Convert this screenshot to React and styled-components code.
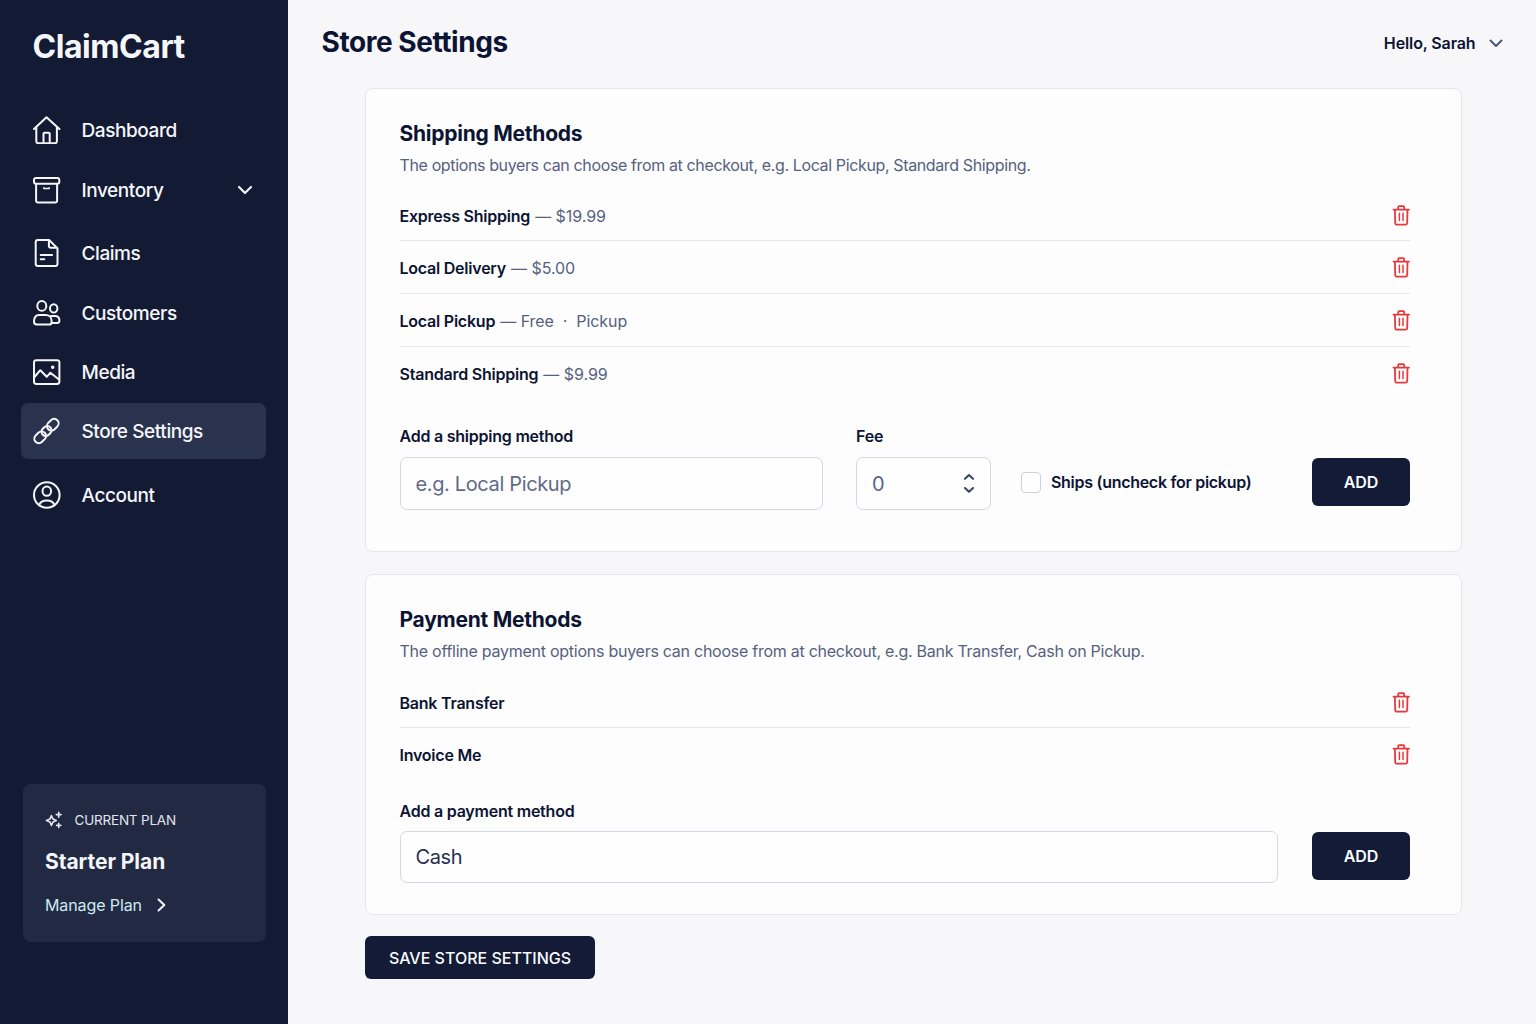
import React from 'react'
import styled, { createGlobalStyle } from 'styled-components'

const GlobalStyle = createGlobalStyle`
  * {
    box-sizing: border-box;
  }
  body {
    margin: 0;
    background: #f7f7f9;
    font-family: Inter, 'Liberation Sans', sans-serif;
    color: #0c1433;
  }
  h1, h2, p, ul {
    margin: 0;
    padding: 0;
  }
  ul {
    list-style: none;
  }
  input, button {
    font-family: inherit;
  }
`

const Page = styled.div`
  display: flex;
  height: 1024px;
  overflow: hidden;
`

/* sidebar */
const Sidebar = styled.aside`
  display: flex;
  flex-direction: column;
  flex: none;
  width: 288px;
  padding: 27px 22.5px 82px 20.5px;
  background: #131b34;
  color: #f5f6fa;
`
const Brand = styled.div`
  padding-left: 12px;
  font-size: 32px;
  font-weight: 700;
  line-height: 40px;
  letter-spacing: -0.45px;
`
const Nav = styled.nav`
  display: flex;
  flex-direction: column;
  margin-top: 35px;
`
const NavItem = styled.a`
  display: flex;
  align-items: center;
  height: 56px;
  margin-top: ${props => props.$gap}px;
  padding: 0 13px 0 12px;
  border-radius: 7px;
  background: ${props => (props.$active ? '#2a334e' : 'transparent')};
`
const NavLabel = styled.span`
  flex: 1;
  padding: 1px 0 0 21px;
  font-size: 19px;
  font-weight: 450;
  line-height: 24px;
  letter-spacing: -0.42px;
`
const Plan = styled.section`
  margin: auto 0 0 2px;
  padding: 26px 22.5px 27px;
  border-radius: 8px;
  background: #222943;
`
const PlanTag = styled.div`
  display: flex;
  align-items: center;
  gap: 11.5px;
  font-size: 13.5px;
  line-height: 20px;
  letter-spacing: -0.2px;
  color: #e3e5ee;
`
const PlanName = styled.div`
  margin-top: 19px;
  font-size: 21px;
  font-weight: 650;
  line-height: 26px;
  letter-spacing: -0.05px;
`
const PlanLink = styled.a`
  display: flex;
  align-items: center;
  gap: 15px;
  margin-top: 20px;
  font-size: 16px;
  line-height: 20px;
  letter-spacing: -0.1px;
  color: #cdeaf2;
`

/* main column */
const Main = styled.main`
  flex: 1;
`
const Header = styled.header`
  display: flex;
  align-items: center;
  justify-content: space-between;
  height: 88px;
  padding: 0 33.5px 4px 33.5px;
`
const PageTitle = styled.h1`
  font-size: 28px;
  font-weight: 650;
  line-height: 36px;
  letter-spacing: -0.45px;
`
const UserMenu = styled.div`
  display: flex;
  align-items: center;
  gap: 13px;
  padding-top: 2px;
  font-size: 16px;
  font-weight: 600;
  letter-spacing: -0.12px;
`
const Content = styled.div`
  width: 1097px;
  margin-left: 77px;
`
const Card = styled.section`
  height: ${props => props.$height}px;
  margin-bottom: ${props => props.$after}px;
  padding: 31px 51px 0 33.5px;
  border: 1px solid #e5e7eb;
  border-radius: 8px;
  background: #fdfdfd;
`
const CardTitle = styled.h2`
  font-size: 21px;
  font-weight: 650;
  line-height: 28px;
  letter-spacing: -0.25px;
`
const CardText = styled.p`
  margin-top: 4.5px;
  font-size: 16px;
  line-height: 24px;
  letter-spacing: ${props => props.$tracking}px;
  white-space: nowrap;
  color: #566180;
`
const Methods = styled.ul`
  margin-top: ${props => props.$gap}px;
`
const Method = styled.li`
  display: flex;
  align-items: center;
  justify-content: space-between;
  height: 53px;
  border-bottom: 1px solid #e6e7eb;
  &:first-child {
    padding-top: 2px;
  }
  &:last-child {
    border-bottom-color: transparent;
  }
`
const MethodText = styled.div`
  padding-top: 2px;
  font-size: 16px;
  line-height: 20px;
  letter-spacing: -0.05px;
  white-space: pre;
  color: #566180;
`
const MethodName = styled.span`
  margin-right: 0.7px;
  font-weight: 600;
  letter-spacing: -0.23px;
  color: #0c1433;
`
const Form = styled.form`
  display: flex;
  align-items: flex-end;
  margin-top: ${props => props.$gap}px;
`
const Field = styled.label`
  display: flex;
  flex-direction: column;
  width: ${props => props.$width}px;
  margin-right: 33.5px;
  font-size: 16px;
  font-weight: 600;
  line-height: 20px;
  letter-spacing: -0.23px;
`
const InputBox = styled.span`
  display: flex;
  align-items: center;
  height: ${props => props.$height}px;
  margin-top: ${props => props.$gap}px;
  padding: 0 15px;
  border: 1px solid #d3d7e0;
  border-radius: 7px;
  background: #fefefe;
`
const Input = styled.input`
  flex: 1;
  min-width: 0;
  padding: 0;
  border: 0;
  outline: 0;
  background: transparent;
  font-size: 20px;
  letter-spacing: -0.36px;
  color: ${props => (props.$muted ? '#5a6684' : '#27304f')};
  &::placeholder {
    color: #5f6a88;
    opacity: 1;
  }
`
const Check = styled.label`
  display: flex;
  align-items: center;
  gap: 10.5px;
  height: 48px;
  margin: 0 0 4px -4px;
  font-size: 16px;
  font-weight: 600;
  letter-spacing: -0.29px;
`
const CheckBox = styled.input`
  appearance: none;
  width: 20px;
  height: 21px;
  margin: 0;
  border: 1px solid #ccd2dd;
  border-radius: 4px;
  background: #fefefe;
`
const Button = styled.button`
  height: 48px;
  padding: 0;
  border: 0;
  border-radius: 6px;
  background: #131b36;
  font-size: 16px;
  font-weight: 600;
  color: #fafbfd;
`
const AddButton = styled(Button)`
  width: 98px;
  margin: 0 0 ${props => props.$lift}px auto;
`
const SaveButton = styled(Button)`
  display: block;
  width: 230px;
  height: 43px;
  font-weight: 550;
`

const Glyph = styled.svg`
  display: block;
  flex: none;
  fill: none;
  stroke: currentColor;
  stroke-width: ${props => props.$stroke || 2};
  stroke-linecap: round;
  stroke-linejoin: round;
  color: ${props => props.$color || 'inherit'};
`

const NavGlyph = ({ children }) => (
  <Glyph width="28" height="28" viewBox="0.5 0 28 28">
    {children}
  </Glyph>
)

const icons = {
  home: (
    <NavGlyph>
      <path d="M1.500 13 14 1.200 26.900 13" />
      <path d="M3.800 11v14.200a2 2 0 0 0 2 2h16.600a2 2 0 0 0 2-2V11" />
      <path d="M11 27v-9.200a1 1 0 0 1 1-1h4.200a1 1 0 0 1 1 1V27" />
    </NavGlyph>
  ),
  box: (
    <NavGlyph>
      <rect x="1.500" y="2" width="25.300" height="5.800" rx="2" />
      <path d="M3.600 8v16.600a2 2 0 0 0 2 2h17a2 2 0 0 0 2-2V8" />
      <path d="M11.400 11.900v.6h5.200v-.6" strokeWidth="1.600" />
    </NavGlyph>
  ),
  doc: (
    <NavGlyph>
      <path d="M16.600 1H5.400a2.200 2.200 0 0 0-2.200 2.200v21.600A2.200 2.200 0 0 0 5.400 27h17.400a2.200 2.200 0 0 0 2.200-2.200V9.400L16.600 1z" />
      <path d="M16.400 1.400v5.400a2 2 0 0 0 2 2h6" />
      <path d="M8.200 16.100h11.400M8.200 20.300h3.600" />
    </NavGlyph>
  ),
  people: (
    <NavGlyph>
      <ellipse cx="9.300" cy="6.900" rx="4.500" ry="4.900" />
      <ellipse cx="21.200" cy="9.400" rx="3.700" ry="4.100" />
      <path d="M6.700 16h6.500c3.400 0 6 2.600 6 6.400 0 2.200-.9 3.200-2.800 3.200H4.200c-1.800 0-2.700-1-2.700-3 0-4 1.800-6.600 5.200-6.600z" />
      <path d="M18.300 17h4.200c2.700 0 4.400 1.900 4.400 4.500 0 1.700-.8 2.500-2.400 2.500h-5.300" />
    </NavGlyph>
  ),
  image: (
    <NavGlyph>
      <rect x="1.500" y="2.200" width="25.400" height="23.800" rx="2.400" />
      <path d="m2 19 5.800-6.800 6.400 6.600 3.700-4.100 8.600 6.800" />
      <circle cx="20.200" cy="9.300" r=".8" fill="currentColor" />
    </NavGlyph>
  ),
  chain: (
    <NavGlyph>
      <g transform="rotate(-45 14 14)">
        <rect x="-1.300" y="9.500" width="12.800" height="9" rx="4.500" />
        <rect x="8.700" y="9.800" width="10.600" height="8.400" rx="4.200" />
        <rect x="16.500" y="9.500" width="12.800" height="9" rx="4.500" />
      </g>
    </NavGlyph>
  ),
  user: (
    <NavGlyph>
      <circle cx="14.300" cy="14" r="12.800" />
      <ellipse cx="14.300" cy="10.200" rx="4.300" ry="4.600" />
      <path d="M6.600 24.300c1-3 4-4.700 7.700-4.700s6.700 1.700 7.700 4.700" />
    </NavGlyph>
  ),
}

const Trash = () => (
  <Glyph width="18" height="21" viewBox="0 0 18 21" $stroke={1.8} $color="#e5393d">
    <path d="M1.500 4.600H17M6.200 4.300V2.200a1 1 0 0 1 1-1h4a1 1 0 0 1 1 1v2.100" />
    <path d="m2.900 5 .3 13A1.800 1.800 0 0 0 5 19.700h8.400a1.800 1.800 0 0 0 1.800-1.700L15.500 5" />
    <path d="M7.400 8.200v7.200M11 8.200v7.200" strokeWidth="1.500" />
  </Glyph>
)

const Sparkles = () => (
  <Glyph width="18" height="18" viewBox="0 0 18 18" $stroke={1.6}>
    <path d="M6.400 4.600 8 8.100l3.300 1.400L8 10.900l-1.600 3.500-1.500-3.500L1.400 9.500l3.500-1.400z" />
    <path d="M13.700 1.400v4.800M11.300 3.600h4.800M13.700 12.200v4.400M11.600 14.400h4.200" />
  </Glyph>
)

const nav = [
  { label: 'Dashboard', icon: 'home', gap: 0 },
  { label: 'Inventory', icon: 'box', gap: 4, expandable: true },
  { label: 'Claims', icon: 'doc', gap: 7 },
  { label: 'Customers', icon: 'people', gap: 4 },
  { label: 'Media', icon: 'image', gap: 3 },
  { label: 'Store Settings', icon: 'chain', gap: 3, active: true },
  { label: 'Account', icon: 'user', gap: 8 },
]

const shipping = [
  { name: 'Express Shipping', detail: ' — $19.99' },
  { name: 'Local Delivery', detail: ' — $5.00' },
  { name: 'Local Pickup', detail: ' — Free  ·  Pickup' },
  { name: 'Standard Shipping', detail: ' — $9.99' },
]

const payment = [{ name: 'Bank Transfer' }, { name: 'Invoice Me' }]

const MethodList = ({ items, gap }) => (
  <Methods $gap={gap}>
    {items.map(item => (
      <Method key={item.name}>
        <MethodText>
          <MethodName>{item.name}</MethodName>
          {item.detail}
        </MethodText>
        <Trash />
      </Method>
    ))}
  </Methods>
)

export default () => {
  return (
    <>
      <GlobalStyle />
      <Page>
        <Sidebar>
          <Brand>ClaimCart</Brand>
          <Nav>
            {nav.map(item => (
              <NavItem key={item.label} $gap={item.gap} $active={item.active}>
                {icons[item.icon]}
                <NavLabel>{item.label}</NavLabel>
                {item.expandable && (
                  <Glyph width="16" height="10" viewBox="0 0 16 10" $stroke={2.2}>
                    <path d="m2 2 6 6 6-6" />
                  </Glyph>
                )}
              </NavItem>
            ))}
          </Nav>
          <Plan>
            <PlanTag>
              <Sparkles />
              CURRENT PLAN
            </PlanTag>
            <PlanName>Starter Plan</PlanName>
            <PlanLink>
              Manage Plan
              <Glyph width="9" height="14" viewBox="0 0 9 14" $stroke={2} $color="#f5f6fa">
                <path d="m1.500 1.500 5.800 5.500-5.800 5.500" />
              </Glyph>
            </PlanLink>
          </Plan>
        </Sidebar>

        <Main>
          <Header>
            <PageTitle>Store Settings</PageTitle>
            <UserMenu>
              Hello, Sarah
              <Glyph width="14" height="9" viewBox="0 0 14 9" $stroke={2} $color="#4a5778">
                <path d="m1.500 1.500 5.500 5.500 5.500-5.500" />
              </Glyph>
            </UserMenu>
          </Header>
          <Content>
            <Card $height={464} $after={22}>
              <CardTitle>Shipping Methods</CardTitle>
              <CardText $tracking={-0.37}>
                The options buyers can choose from at checkout, e.g. Local Pickup, Standard Shipping.
              </CardText>
              <MethodList items={shipping} gap={11.5} />
              <Form $gap={26}>
                <Field $width={423}>
                  Add a shipping method
                  <InputBox $height={53} $gap={11}>
                    <Input placeholder="e.g. Local Pickup" />
                  </InputBox>
                </Field>
                <Field $width={135}>
                  Fee
                  <InputBox $height={53} $gap={11}>
                    <Input defaultValue="0" $muted />
                    <Glyph width="12" height="20" viewBox="0 0 12 20" $stroke={2.1} $color="#3d4869">
                      <path d="m2 4.800 4-3.800 4 3.800M2 14l4 3.800 4-3.800" />
                    </Glyph>
                  </InputBox>
                </Field>
                <Check>
                  <CheckBox type="checkbox" />
                  Ships (uncheck for pickup)
                </Check>
                <AddButton type="button" $lift={4}>
                  ADD
                </AddButton>
              </Form>
            </Card>

            <Card $height={341} $after={21}>
              <CardTitle>Payment Methods</CardTitle>
              <CardText $tracking={-0.26}>
                The offline payment options buyers can choose from at checkout, e.g. Bank Transfer,
                Cash on Pickup.
              </CardText>
              <MethodList items={payment} gap={12.5} />
              <Form $gap={20}>
                <Field $width={878}>
                  Add a payment method
                  <InputBox $height={52} $gap={10}>
                    <Input defaultValue="Cash" />
                  </InputBox>
                </Field>
                <AddButton type="button" $lift={3}>
                  ADD
                </AddButton>
              </Form>
            </Card>

            <SaveButton type="button">SAVE STORE SETTINGS</SaveButton>
          </Content>
        </Main>
      </Page>
    </>
  )
}
